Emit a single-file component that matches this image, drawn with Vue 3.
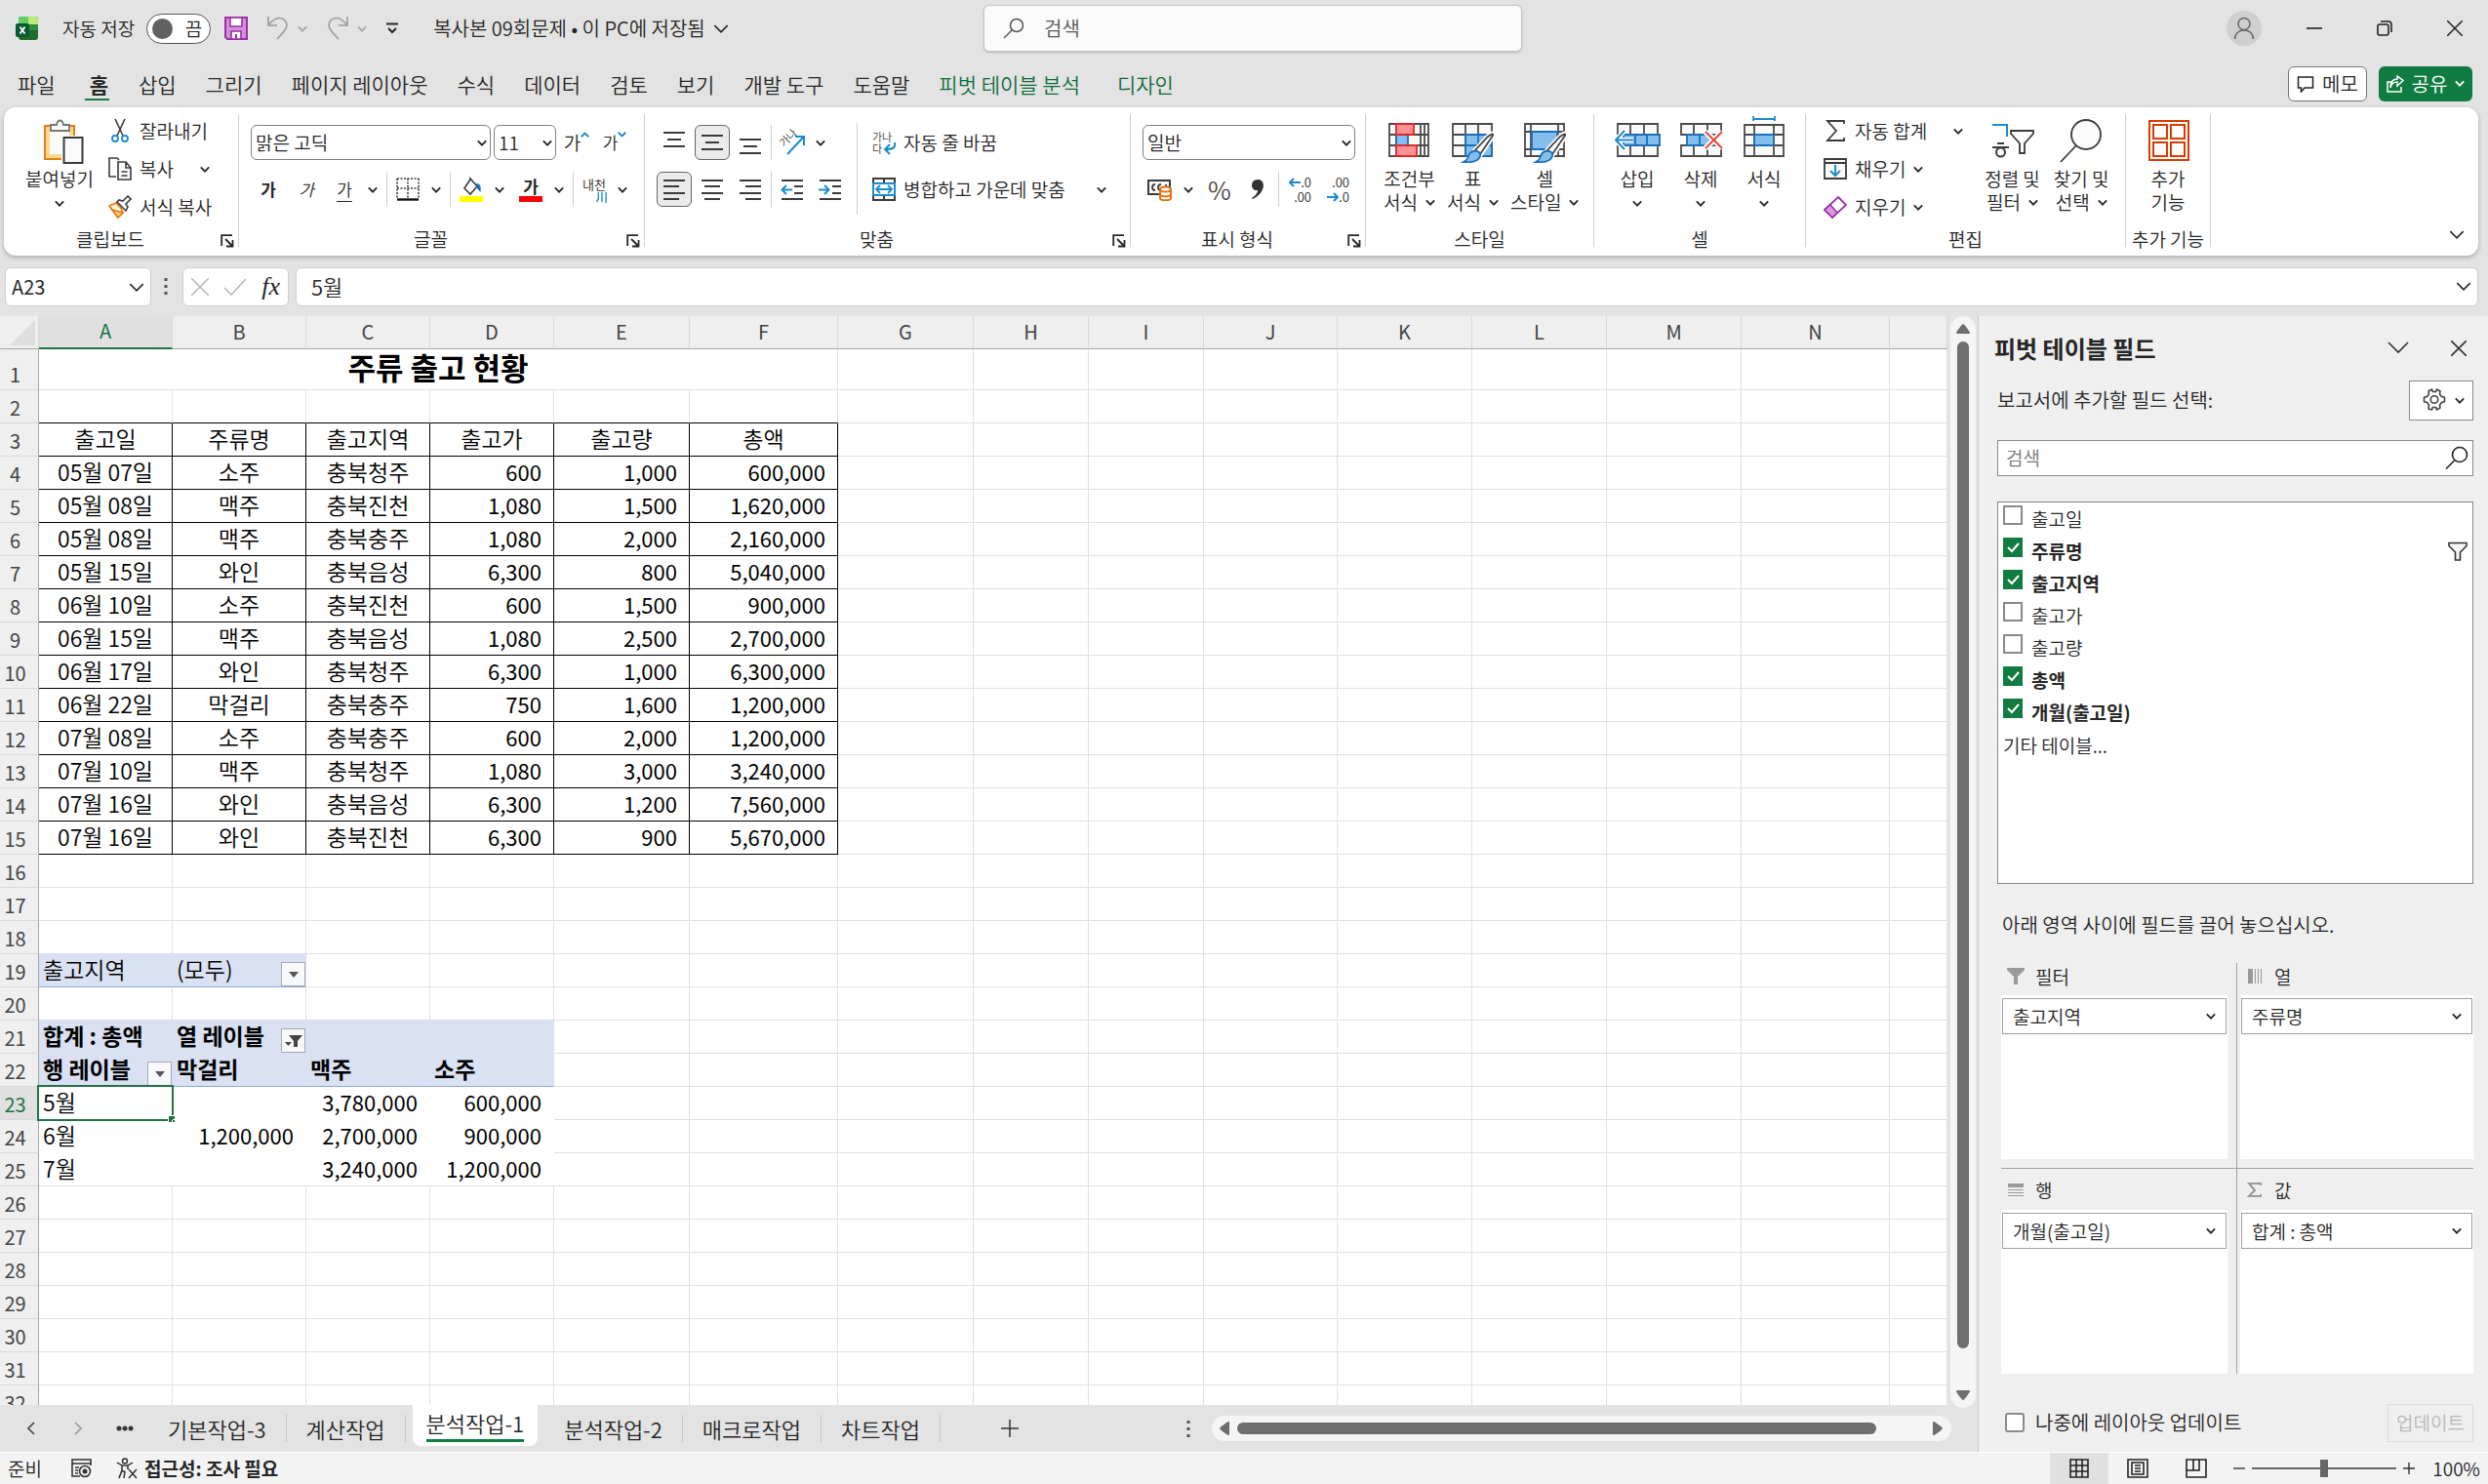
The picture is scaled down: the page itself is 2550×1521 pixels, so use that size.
<script setup>
import { h, ref } from 'vue'

const Chevron = (props) =>
  h('svg', { viewBox: '0 0 12 8', width: props.big ? 16 : 10, height: props.big ? 11 : 7, 'aria-hidden': 'true' }, [
    h('path', { d: 'M1 1.5 6 6.5 11 1.5', fill: 'none', stroke: props.color || '#262626', 'stroke-width': props.big ? 1.2 : 2.2 }),
  ])
Chevron.props = { big: Boolean, color: String }

const Launcher = () =>
  h('svg', { viewBox: '0 0 14 14', width: 14, height: 14, 'aria-hidden': 'true' }, [
    h('path', { d: 'M1.2 12V1.2H12M5 5l7 7M12.5 6v6.5H6', fill: 'none', stroke: '#262626', 'stroke-width': 1.8 }),
  ])

const Lines = (props) =>
  h('svg', { viewBox: '0 0 24 24', width: 24, height: 24, 'aria-hidden': 'true' },
    props.rows.map(([x1, x2, y]) => h('path', { d: `M${x1} ${y}H${x2}`, stroke: '#3b3b3b', 'stroke-width': 2 })))
Lines.props = ['rows']

const menus = ['파일', '홈', '삽입', '그리기', '페이지 레이아웃', '수식', '데이터', '검토', '보기', '개발 도구', '도움말', '피벗 테이블 분석', '디자인']
const cols = 'ABCDEFGHIJKLMN'.split('')

const head = ['출고일', '주류명', '출고지역', '출고가', '출고량', '총액']
const data = [
  ['05월 07일', '소주', '충북청주', '600', '1,000', '600,000'],
  ['05월 08일', '맥주', '충북진천', '1,080', '1,500', '1,620,000'],
  ['05월 08일', '맥주', '충북충주', '1,080', '2,000', '2,160,000'],
  ['05월 15일', '와인', '충북음성', '6,300', '800', '5,040,000'],
  ['06월 10일', '소주', '충북진천', '600', '1,500', '900,000'],
  ['06월 15일', '맥주', '충북음성', '1,080', '2,500', '2,700,000'],
  ['06월 17일', '와인', '충북청주', '6,300', '1,000', '6,300,000'],
  ['06월 22일', '막걸리', '충북충주', '750', '1,600', '1,200,000'],
  ['07월 08일', '소주', '충북충주', '600', '2,000', '1,200,000'],
  ['07월 10일', '맥주', '충북청주', '1,080', '3,000', '3,240,000'],
  ['07월 16일', '와인', '충북음성', '6,300', '1,200', '7,560,000'],
  ['07월 16일', '와인', '충북진천', '6,300', '900', '5,670,000'],
]
const pivot = {
  19: ['출고지역', '(모두)'],
  21: ['합계 : 총액', '열 레이블', '', ''],
  22: ['행 레이블', '막걸리', '맥주', '소주'],
  23: ['5월', '', '3,780,000', '600,000'],
  24: ['6월', '1,200,000', '2,700,000', '900,000'],
  25: ['7월', '', '3,240,000', '1,200,000'],
}

function cell(r, c) {
  if (r === 3 && c < 6) return { t: head[c], k: 'box mid' }
  if (r >= 4 && r <= 15 && c < 6) return { t: data[r - 4][c], k: c < 3 ? 'box mid' : 'box num' }
  if (r === 2 && c < 6) return { t: '', k: 'under' }
  if (r === 18 && c < 2) return { t: '', k: 'fill-under' }
  if (r === 20 && c < 4) return { t: '', k: 'fill-under' }
  if (pivot[r] && c < pivot[r].length) {
    const t = pivot[r][c]
    let k = 'left'
    if (r === 19) k += ' fill rule'
    if (r === 21) k += ' fill bold'
    if (r === 22) k += ' fill bold rule'
    if (r > 22) k = (c ? 'num' : 'left') + (r === 25 ? ' bare-last' : ' bare')
    if (r === 23 && c === 0) k += ' picked'
    return { t, k }
  }
  return { t: '', k: '' }
}
const rows = Array.from({ length: 31 }, (_, i) => {
  const r = i + 2
  return { r, cells: Array.from({ length: 15 }, (_, c) => ({ ...cell(r, c), c })) }
})
const dropKind = (r, c) => (r === 19 && c === 1) || (r === 22 && c === 0) ? 'arrow' : r === 21 && c === 1 ? 'funnel' : ''

const fields = ref([
  { n: '출고일', on: false },
  { n: '주류명', on: true, filtered: true },
  { n: '출고지역', on: true },
  { n: '출고가', on: false },
  { n: '출고량', on: false },
  { n: '총액', on: true },
  { n: '개월(출고일)', on: true },
])
const later = ref(false)
const zoom = ref(50)
const areas = [
  { n: '필터', item: '출고지역', icon: 'funnel' },
  { n: '열', item: '주류명', icon: 'cols' },
  { n: '행', item: '개월(출고일)', icon: 'rows' },
  { n: '값', item: '합계 : 총액', icon: 'sum' },
]
const sheets = ['기본작업-3', '계산작업', '분석작업-1', '분석작업-2', '매크로작업', '차트작업']
</script>

<template>
  <div class="app">
    <header class="title-bar">
      <svg class="logo" viewBox="0 0 24 24" width="24" height="24" aria-hidden="true">
        <rect x="3" y="0" width="20" height="24" rx="3" fill="#1f6b2b" />
        <path d="M3 8V3a3 3 0 0 1 3-3h7v8z" fill="#5fd068" />
        <path d="M13 0h7a3 3 0 0 1 3 3v5H13z" fill="#b9ec7a" />
        <path d="M13 8h10v6H13z" fill="#2f8f3a" />
        <rect x="0" y="7" width="14" height="14" rx="2" fill="#0c5a34" />
        <path d="m4.500 10.500 5 7m0-7-5 7" stroke="#fff" stroke-width="1.800" />
      </svg>
      <span class="auto" id="auto-label">자동 저장</span>
      <button class="toggle" role="switch" aria-checked="false" aria-labelledby="auto-label"><i></i>끔</button>
      <button class="plain save" aria-label="저장">
        <svg viewBox="0 0 24 24" width="24" height="24">
          <path d="M1 1h22v22H3l-2-2z" fill="#d58fdc" stroke="#9a2fa5" stroke-width="2" />
          <path d="M6 1h12v9H6zM7 15h10v8H7z" fill="#fff" stroke="#9a2fa5" stroke-width="1.600" />
          <path d="M12 18v5" stroke="#9a2fa5" stroke-width="2" />
        </svg>
      </button>
      <button class="plain undo" aria-label="실행 취소">
        <svg viewBox="0 0 24 26" width="24" height="26"><path d="M2 1v9h9M2.500 9.500C8 2 15 .5 19 5c4 5 2 9-8 19" fill="none" stroke="#9c9c9c" stroke-width="1.600" /></svg>
        <Chevron color="#a8a8a8" />
      </button>
      <button class="plain undo" aria-label="다시 실행">
        <svg viewBox="0 0 24 26" width="24" height="26"><path d="M22 1v9h-9M21.500 9.500C16 2 9 .5 5 5c-4 5-2 9 8 19" fill="none" stroke="#9c9c9c" stroke-width="1.600" /></svg>
        <Chevron color="#a8a8a8" />
      </button>
      <button class="plain custom" aria-label="빠른 실행 도구 모음 사용자 지정">
        <svg viewBox="0 0 12 12" width="12" height="12"><path d="M0 1.500h12M2 6l4 4 4-4" fill="none" stroke="#262626" stroke-width="2" /></svg>
      </button>
      <button class="plain doc">복사본 09회문제 • 이 PC에 저장됨 <Chevron big /></button>
      <label class="find">
        <svg viewBox="0 0 22 22" width="22" height="22" aria-hidden="true"><circle cx="14" cy="8" r="6.500" fill="none" stroke="#555" stroke-width="1.500" /><path d="M9.500 12.500 1 21" stroke="#555" stroke-width="1.500" /></svg>
        <input type="text" placeholder="검색" aria-label="검색" />
      </label>
      <div class="window">
        <button class="plain avatar" aria-label="로그인">
          <svg viewBox="0 0 36 36" width="36" height="36"><circle cx="18" cy="18" r="18" fill="#cfcfcf" /><circle cx="18" cy="13.500" r="6" fill="none" stroke="#666" stroke-width="1.500" /><path d="M8.500 29c0-12 19-12 19 0" fill="none" stroke="#666" stroke-width="1.500" /></svg>
        </button>
        <button class="plain" aria-label="최소화"><svg viewBox="0 0 16 16" width="16" height="16"><path d="M0 8h16" stroke="#222" stroke-width="1.600" /></svg></button>
        <button class="plain" aria-label="이전 크기로 복원"><svg viewBox="0 0 16 16" width="16" height="16"><rect x="1" y="4" width="11" height="11" rx="2" fill="none" stroke="#222" stroke-width="1.600" /><path d="M4 1h8a3 3 0 0 1 3 3v8" fill="none" stroke="#222" stroke-width="1.600" /></svg></button>
        <button class="plain" aria-label="닫기"><svg viewBox="0 0 16 16" width="16" height="16"><path d="m0 0 16 16M16 0 0 16" stroke="#222" stroke-width="1.500" /></svg></button>
      </div>
    </header>

    <nav class="menu">
      <a v-for="(m, i) in menus" :key="m" href="#" :class="{ on: i === 1, context: i > 10 }">{{ m }}</a>
      <div class="menu-right">
        <button class="memo">
          <svg viewBox="0 0 18 18" width="18" height="18" aria-hidden="true"><path d="M1.500 2h15v11H8l-3.500 4v-4h-3z" fill="none" stroke="#222" stroke-width="1.500" /></svg>메모
        </button>
        <button class="share">
          <svg viewBox="0 0 18 18" width="18" height="18" aria-hidden="true"><path d="M5 7H1v10h14v-5M4 13c1-5 4-6 7-6v4l6-5.500L11 1v3C7 4 4 7 4 13z" fill="none" stroke="#fff" stroke-width="1.500" /></svg>공유
          <Chevron color="#fff" />
        </button>
      </div>
    </nav>

    <section class="ribbon" aria-label="홈 리본">
      <div class="group clip">
        <div class="body">
          <button class="big paste">
            <svg viewBox="0 0 44 46" width="44" height="46" aria-hidden="true">
              <path d="M3 7h30v34H3z" fill="#fafafa" stroke="#e67e14" stroke-width="2" /><path d="M6 10h24v28H6z" fill="#fafafa" stroke="#f9d98c" stroke-width="4" />
              <path d="M9 12V6h6c1-6 6-6 7 0h6v6z" fill="#fafafa" stroke="#777" stroke-width="1.800" />
              <path d="M20 17h24v29H20z" fill="#fff" /><path d="M22.500 19h19v26h-19z" fill="#fafafa" stroke="#3b3b3b" stroke-width="2" />
            </svg>
            <span>붙여넣기</span><Chevron />
          </button>
          <div class="stack">
            <button class="line">
              <svg viewBox="0 0 24 24" width="24" height="24" aria-hidden="true"><path d="m7 0 8 17M17 0 9 17" stroke="#3b3b3b" stroke-width="1.600" /><circle cx="7" cy="20" r="3" fill="none" stroke="#1e8bcd" stroke-width="1.800" /><circle cx="17" cy="20" r="3" fill="none" stroke="#1e8bcd" stroke-width="1.800" /></svg>잘라내기
            </button>
            <button class="line wide">
              <svg viewBox="0 0 24 24" width="24" height="24" aria-hidden="true"><path d="M8 20H1V1h8l2 2" fill="none" stroke="#3b3b3b" stroke-width="1.600" /><path d="M10 5h8l5 6v12H10zM18 5v6h5M13.500 15h6M13.500 19h6" fill="#fafafa" stroke="#3b3b3b" stroke-width="1.600" /></svg>복사 <Chevron />
            </button>
            <button class="line">
              <svg viewBox="0 0 24 24" width="24" height="24" aria-hidden="true"><path d="m1 11 9 12 5-5-2-5-5-5z" fill="#fff3da" stroke="#e67e14" stroke-width="1.800" /><path d="m4 15 11 3-5 5z" fill="#f9cf80" stroke="#e67e14" stroke-width="1.500" /><path d="m9 7 9 9 2-4-2-3 5-5-3-3-5 5-4-1z" fill="#fff" stroke="#3b3b3b" stroke-width="1.600" /></svg>서식 복사
            </button>
          </div>
        </div>
        <div class="label has-launch"><span>클립보드</span><button class="plain launch" aria-label="클립보드 옵션"><Launcher /></button></div>
      </div>

      <div class="group font">
        <div class="body rows">
          <div class="row">
            <span class="pick name"><select aria-label="글꼴"><option>맑은 고딕</option></select><Chevron /></span>
            <span class="pick size"><select aria-label="글꼴 크기"><option>11</option></select><Chevron /></span>
            <button class="ib grow" aria-label="글꼴 크기 크게">가<svg viewBox="0 0 12 8" width="9" height="6"><path d="m1 7 5-5 5 5" fill="none" stroke="#1e8bcd" stroke-width="2.500" /></svg></button>
            <button class="ib shrink" aria-label="글꼴 크기 작게">가<svg viewBox="0 0 12 8" width="9" height="6"><path d="m1 1 5 5 5-5" fill="none" stroke="#1e8bcd" stroke-width="2.500" /></svg></button>
          </div>
          <div class="row">
            <button class="ib b" aria-label="굵게">가</button>
            <button class="ib i" aria-label="기울임꼴">가</button>
            <span class="pair"><button class="ib u" aria-label="밑줄">가</button><button class="cv" aria-label="밑줄 종류"><Chevron /></button></span>
            <i class="sep"></i>
            <span class="pair"><button class="ib" aria-label="테두리"><svg viewBox="0 0 24 24" width="24" height="24"><path d="M1 1h22M1 1v20M23 1v20M12 1v20M1 11h22" stroke="#3b3b3b" stroke-width="1.600" stroke-dasharray="2 1.500" /><path d="M1 22.500h22" stroke="#111" stroke-width="2.400" /></svg></button><button class="cv" aria-label="테두리 종류"><Chevron /></button></span>
            <i class="sep"></i>
            <span class="pair"><button class="ib" aria-label="채우기 색"><svg viewBox="0 0 24 26" width="24" height="26"><path d="m11 2 7 8-7 8-6-6 6-9z" fill="#fff" stroke="#3b3b3b" stroke-width="1.600" /><path d="M17 7c5 0 5 4 4.500 9L17 11z" fill="#1e6fb8" /><rect y="20" width="24" height="6" fill="#ff0" /></svg></button><button class="cv" aria-label="채우기 색 목록"><Chevron /></button></span>
            <span class="pair"><button class="ib ink" aria-label="글꼴 색">가<i></i></button><button class="cv" aria-label="글꼴 색 목록"><Chevron /></button></span>
            <i class="sep"></i>
            <span class="pair"><button class="ib ruby" aria-label="윗주"><span>내천</span><svg viewBox="0 0 12 12" width="12" height="11"><path d="M2 0v7l-2 4M6 0v11M10.500 0v12" fill="none" stroke="#1e8bcd" stroke-width="1.500" /></svg></button><button class="cv" aria-label="윗주 옵션"><Chevron /></button></span>
          </div>
        </div>
        <div class="label has-launch"><span>글꼴</span><button class="plain launch" aria-label="글꼴 옵션"><Launcher /></button></div>
      </div>

      <div class="group align">
        <div class="body">
          <div class="rows">
            <div class="row">
              <button class="ib" aria-label="위쪽 맞춤"><Lines :rows="[[1, 23, 2], [5, 19, 9], [1, 23, 16]]" /></button>
              <button class="ib sel" aria-label="가운데 맞춤"><Lines :rows="[[1, 23, 5], [5, 19, 12], [1, 23, 19]]" /></button>
              <button class="ib" aria-label="아래쪽 맞춤"><Lines :rows="[[1, 23, 9], [5, 19, 16], [1, 23, 23]]" /></button>
              <i class="sep"></i>
              <span class="pair"><button class="ib" aria-label="방향"><svg class="glyph" viewBox="0 0 26 26" width="26" height="26"><text x="1" y="14" font-size="11" fill="#3b3b3b" transform="rotate(-45 8 12)">가나</text><path d="M8 25 24 8M16 7h9v9" fill="none" stroke="#1e8bcd" stroke-width="2" /></svg></button><button class="cv" aria-label="방향 목록"><Chevron /></button></span>
            </div>
            <div class="row">
              <button class="ib sel" aria-label="왼쪽 맞춤"><Lines :rows="[[1, 23, 3], [1, 17, 9], [1, 23, 16], [1, 17, 22]]" /></button>
              <button class="ib" aria-label="가로 가운데 맞춤"><Lines :rows="[[1, 23, 3], [4, 20, 9], [1, 23, 16], [4, 20, 22]]" /></button>
              <button class="ib" aria-label="오른쪽 맞춤"><Lines :rows="[[1, 23, 3], [7, 23, 9], [1, 23, 16], [7, 23, 22]]" /></button>
              <i class="sep"></i>
              <button class="ib" aria-label="내어쓰기"><svg viewBox="0 0 24 24" width="24" height="24"><path d="M1 3h22M14 9h9M14 16h9M1 22h22" stroke="#3b3b3b" stroke-width="2" /><path d="M12 12.500H2M6 8l-4.500 4.500L6 17" fill="none" stroke="#1e8bcd" stroke-width="2" /></svg></button>
              <button class="ib" aria-label="들여쓰기"><svg viewBox="0 0 24 24" width="24" height="24"><path d="M1 3h22M14 9h9M14 16h9M1 22h22" stroke="#3b3b3b" stroke-width="2" /><path d="M0 12.500h10M6 8l4.500 4.500L6 17" fill="none" stroke="#1e8bcd" stroke-width="2" /></svg></button>
            </div>
          </div>
          <i class="tall"></i>
          <div class="rows">
            <button class="line">
              <svg class="glyph" viewBox="0 0 26 26" width="26" height="26" aria-hidden="true"><text x="1" y="12" font-size="11" fill="#3b3b3b">가나</text><text x="1" y="24" font-size="11" fill="#3b3b3b">다</text><path d="M24 13c1 5-1 7-9 7M19 15l-5 5 5 5" fill="none" stroke="#1e8bcd" stroke-width="2" /></svg>자동 줄 바꿈
            </button>
            <button class="line merge">
              <svg viewBox="0 0 26 26" width="26" height="26" aria-hidden="true"><path d="M2 2h22v22H2zM13 2v4M13 20v4" fill="none" stroke="#3b3b3b" stroke-width="2" /><path d="M2 7h22v12H2z" fill="#fff" stroke="#1e8bcd" stroke-width="2" /><path d="M5 13h16M9 9l-4 4 4 4M17 9l4 4-4 4" fill="none" stroke="#1e8bcd" stroke-width="1.800" /></svg>병합하고 가운데 맞춤 <Chevron />
            </button>
          </div>
        </div>
        <div class="label has-launch"><span>맞춤</span><button class="plain launch" aria-label="맞춤 옵션"><Launcher /></button></div>
      </div>

      <div class="group number">
        <div class="body rows">
          <div class="row"><span class="pick fmt"><select aria-label="표시 형식"><option>일반</option></select><Chevron /></span></div>
          <div class="row">
            <span class="pair"><button class="ib" aria-label="회계 표시 형식"><svg viewBox="0 0 26 24" width="26" height="24"><path d="M1 3h22v14H1z" fill="#fafafa" stroke="#3b3b3b" stroke-width="2" /><path d="M8 7c-4 0-4 6 0 6M14 7c-4 0-4 6 0 6M19 7v3" fill="none" stroke="#3b3b3b" stroke-width="1.800" /><path d="M13 12v9c0 3 11 3 11 0v-9" fill="#fff" stroke="#e0730d" stroke-width="2" /><ellipse cx="18.500" cy="12" rx="5.500" ry="2.500" fill="#fff" stroke="#e0730d" stroke-width="2" /><path d="M13 17c0 3 11 3 11 0" fill="none" stroke="#e0730d" stroke-width="2" /></svg></button><button class="cv" aria-label="회계 표시 형식 목록"><Chevron /></button></span>
            <button class="ib pct" aria-label="백분율">%</button>
            <button class="ib" aria-label="쉼표"><svg viewBox="0 0 14 20" width="14" height="20"><path d="M7 0c9 0 8 14-5 20l-1-1c4-3 6-5 6-8C-1 12-1 0 7 0z" fill="#333" /></svg></button>
            <i class="sep"></i>
            <button class="ib dec" aria-label="자릿수 늘림"><span><svg viewBox="0 0 12 10" width="12" height="10"><path d="M12 5H1M5 1 1 5l4 4" fill="none" stroke="#1e8bcd" stroke-width="2" /></svg>.0</span><span>.00</span></button>
            <button class="ib dec" aria-label="자릿수 줄임"><span>.00</span><span><svg viewBox="0 0 12 10" width="12" height="10"><path d="M0 5h11M7 1l4 4-4 4" fill="none" stroke="#1e8bcd" stroke-width="2" /></svg>.0</span></button>
          </div>
        </div>
        <div class="label has-launch"><span>표시 형식</span><button class="plain launch" aria-label="표시 형식 옵션"><Launcher /></button></div>
      </div>

      <div class="group style">
        <div class="body">
          <button class="big">
            <svg viewBox="0 0 44 46" width="44" height="46" aria-hidden="true"><path d="M2 5h40v33H2zM2 16h40M2 27h40M9 5v33M34 5v33M38 5v33" fill="#fafafa" stroke="#4a4a4a" stroke-width="1.800" /><path d="M9 16h12v11H9z" fill="#83beec" stroke="#1a6fb8" stroke-width="1.800" /><path d="M9 5h18v11H9zM9 27h21v11H9z" fill="#ff9196" stroke="#d92a2a" stroke-width="1.800" /></svg>
            <span>조건부</span><span>서식 <Chevron /></span>
          </button>
          <button class="big">
            <svg viewBox="0 0 44 46" width="44" height="46" aria-hidden="true"><path d="M2 5h40v33H2zM2 16h40M2 27h40M15 5v33M28 5v33" fill="#fafafa" stroke="#4a4a4a" stroke-width="1.800" /><path d="M15 16h27v22H15zM28 16v22M15 27h27" fill="#83beec" stroke="#1a6fb8" stroke-width="1.800" /><path d="m44 16-14 21-6-4 14-15c3-3 6-4 6-2z" fill="#fff" stroke="#fff" stroke-width="5" /><path d="m43 17-13 19-5-4 13-14c3-2 6-4 5-1z" fill="#fff" stroke="#444" stroke-width="1.800" /><path d="M24 33c4-1 7 2 6 5-1 4-5 7-17 6 4-2 4-3 5-6 1-3 3-5 6-5z" fill="#83beec" stroke="#1a6fb8" stroke-width="1.800" /></svg>
            <span>표</span><span>서식 <Chevron /></span>
          </button>
          <button class="big">
            <svg viewBox="0 0 44 46" width="44" height="46" aria-hidden="true"><path d="M2 5h40v33H2zM2 13h40M8 5v33M36 5v33M2 31h40" fill="#fafafa" stroke="#4a4a4a" stroke-width="1.800" /><path d="M9 13h26v18H9z" fill="#83beec" stroke="#1a6fb8" stroke-width="1.800" /><path d="m44 16-14 21-6-4 14-15c3-3 6-4 6-2z" fill="#fff" stroke="#fff" stroke-width="5" /><path d="m43 17-13 19-5-4 13-14c3-2 6-4 5-1z" fill="#fff" stroke="#444" stroke-width="1.800" /><path d="M24 33c4-1 7 2 6 5-1 4-5 7-17 6 4-2 4-3 5-6 1-3 3-5 6-5z" fill="#83beec" stroke="#1a6fb8" stroke-width="1.800" /></svg>
            <span>셀</span><span>스타일 <Chevron /></span>
          </button>
        </div>
        <div class="label"><span>스타일</span></div>
      </div>

      <div class="group cells">
        <div class="body">
          <button class="big">
            <svg viewBox="0 0 48 46" width="48" height="46" aria-hidden="true"><path d="M4 5h41v33H4zM4 16h41M4 27h41M17 5v33M31 5v33" fill="#fafafa" stroke="#4a4a4a" stroke-width="1.800" /><path d="M10 16h37v11H10zM22 16v11M34 16v11" fill="#83beec" stroke="#1a6fb8" stroke-width="1.800" /><path d="M20 21.500H2M11 12l-9 9.500 9 9.500" fill="none" stroke="#fff" stroke-width="5" /><path d="M20 21.500H2M11 12l-9 9.500 9 9.500" fill="none" stroke="#1e8bcd" stroke-width="2" /></svg>
            <span>삽입</span><Chevron />
          </button>
          <button class="big">
            <svg viewBox="0 0 48 46" width="48" height="46" aria-hidden="true"><path d="M4 5h41v11H4zM4 27h41v11H4zM17 5v11M31 5v11M17 27v11M31 27v11" fill="#fafafa" stroke="#4a4a4a" stroke-width="1.800" /><path d="M10 16h26v11H10zM23 16v11" fill="#83beec" stroke="#1a6fb8" stroke-width="1.800" /><path d="m29 13 17 17M46 13 29 30" stroke="#fff" stroke-width="6" /><path d="m29 13 17 17M46 13 29 30" stroke="#e8453c" stroke-width="2" /></svg>
            <span>삭제</span><Chevron />
          </button>
          <button class="big">
            <svg class="glyph" viewBox="0 0 48 46" width="48" height="46" aria-hidden="true"><path d="M4 6h40v32H4zM4 16h40M4 27h40M14 6v32M34 6v32" fill="#fafafa" stroke="#4a4a4a" stroke-width="1.800" /><path d="M14 16h20v11H14z" fill="#83beec" stroke="#1a6fb8" stroke-width="1.800" /><path d="M13 0h22M13-3v5M35-3v5" stroke="#1e8bcd" stroke-width="1.800" /></svg>
            <span>서식</span><Chevron />
          </button>
        </div>
        <div class="label"><span>셀</span></div>
      </div>

      <div class="group edit">
        <div class="body">
          <div class="stack">
            <button class="line wide">
              <svg viewBox="0 0 24 24" width="24" height="24" aria-hidden="true"><path d="M21 5V2H4l9 10-9 10h17v-3" fill="none" stroke="#3b3b3b" stroke-width="1.800" /></svg>자동 합계 <Chevron />
            </button>
            <button class="line">
              <svg viewBox="0 0 24 24" width="24" height="24" aria-hidden="true"><path d="M1 2h22v20H1zM1 6h22" fill="#fafafa" stroke="#3b3b3b" stroke-width="1.800" /><path d="M12 8v11M7 14l5 5 5-5" fill="none" stroke="#1e8bcd" stroke-width="2" /></svg>채우기 <Chevron />
            </button>
            <button class="line">
              <svg viewBox="0 0 24 24" width="24" height="24" aria-hidden="true"><path d="m15 2 8 8-14 13-8-8z" fill="#fff" stroke="#9a2fa5" stroke-width="1.800" /><path d="m7 10 7 8-5 5-8-8z" fill="#d79bdc" stroke="#9a2fa5" stroke-width="1.500" /></svg>지우기 <Chevron />
            </button>
          </div>
          <button class="big sort">
            <svg viewBox="0 0 44 46" width="44" height="46" aria-hidden="true"><path d="M1 6h15v12" fill="none" stroke="#1e8bcd" stroke-width="2" /><path d="M6 25h7M1 29h17" stroke="#3b3b3b" stroke-width="2" /><circle cx="9.500" cy="34" r="4.500" fill="none" stroke="#3b3b3b" stroke-width="2" /><path d="M20 12h23v3l-9 10v10h-5V25l-9-10z" fill="#fafafa" stroke="#3b3b3b" stroke-width="1.800" /></svg>
            <span>정렬 및</span><span>필터 <Chevron /></span>
          </button>
          <button class="big">
            <svg viewBox="0 0 44 46" width="44" height="46" aria-hidden="true"><circle cx="27" cy="16" r="15" fill="#fafafa" stroke="#3b3b3b" stroke-width="1.800" /><path d="M17 27 1 44" stroke="#3b3b3b" stroke-width="1.800" /></svg>
            <span>찾기 및</span><span>선택 <Chevron /></span>
          </button>
        </div>
        <div class="label"><span>편집</span></div>
      </div>

      <div class="group addin">
        <div class="body">
          <button class="big">
            <svg viewBox="0 0 44 46" width="44" height="46" aria-hidden="true"><path d="M3 2h40v40H3zM7 6h14v14H7zM25 6h14v14H25zM7 24h14v14H7zM25 24h14v14H25z" fill="#fff" stroke="#d83b01" stroke-width="2" /></svg>
            <span>추가</span><span>기능</span>
          </button>
        </div>
        <div class="label"><span>추가 기능</span></div>
      </div>
      <button class="plain fold" aria-label="리본 축소"><Chevron big /></button>
    </section>

    <div class="formula">
      <label class="name-box"><input type="text" value="A23" aria-label="이름 상자" /><Chevron big /></label>
      <svg class="grip" viewBox="0 0 4 18" width="4" height="18" aria-hidden="true"><path d="M2 0v18" stroke="#555" stroke-width="3" stroke-dasharray="3 4" /></svg>
      <div class="fx">
        <button class="plain" aria-label="취소"><svg viewBox="0 0 18 18" width="18" height="18"><path d="m0 0 18 18M18 0 0 18" stroke="#b5b5b5" stroke-width="1.500" /></svg></button>
        <button class="plain" aria-label="입력"><svg viewBox="0 0 24 18" width="24" height="18"><path d="m1 10 7 7L23 1" fill="none" stroke="#b5b5b5" stroke-width="1.500" /></svg></button>
        <button class="plain fn" aria-label="함수 삽입">fx</button>
      </div>
      <label class="entry"><input type="text" value="5월" aria-label="수식 입력줄" /><Chevron big /></label>
    </div>

    <div class="work">
      <div class="book">
        <div class="grid-area">
          <div class="sheet">
            <table>
              <colgroup><col class="c-n" /><col class="c-a" /><col class="c-a" /><col class="c-c" /><col class="c-c" /><col class="c-g" /><col class="c-f" /><col class="c-g" /><col class="c-h" /><col class="c-h" /><col class="c-a" /><col class="c-k" /><col class="c-k" /><col class="c-k" /><col class="c-f" /><col /></colgroup>
              <thead>
                <tr><th class="corner"><svg viewBox="0 0 26 26" width="26" height="26" aria-hidden="true"><path d="M26 0v26H0z" fill="#dedede" /></svg></th><th v-for="c in cols" :key="c" scope="col" :class="{ cur: c === 'A' }">{{ c }}</th><th></th></tr>
              </thead>
              <tbody>
                <tr class="first"><th scope="row">1</th><td colspan="6" class="title">주류 출고 현황</td><td v-for="n in 9" :key="n"></td></tr>
                <tr v-for="row in rows" :key="row.r">
                  <th scope="row" :class="{ cur: row.r === 23 }">{{ row.r }}</th>
                  <td v-for="x in row.cells" :key="x.c" :class="x.k">{{ x.t }}<button v-if="dropKind(row.r, x.c)" class="drop" aria-label="필터 단추">
                    <svg v-if="dropKind(row.r, x.c) === 'arrow'" viewBox="0 0 10 6" width="10" height="6"><path d="M0 0h10L5 6z" fill="#555" /></svg>
                    <svg v-else viewBox="0 0 18 14" width="18" height="14"><path d="M4 1h14l-5 6v6H9V7zM0 8h7L3.500 12z" fill="#444" /></svg>
                  </button></td>
                </tr>
              </tbody>
            </table>
          </div>
          <div class="vbar">
            <svg viewBox="0 0 14 10" width="14" height="10" aria-hidden="true"><path d="M7 0c1 0 7 8 7 9s-.5 1-1 1H1c-.5 0-1 0-1-1s6-9 7-9z" fill="#6e6e6e" /></svg>
            <i></i>
            <svg viewBox="0 0 14 10" width="14" height="10" aria-hidden="true"><path d="M7 10c1 0 7-8 7-9s-.5-1-1-1H1C.5 0 0 0 0 1s6 9 7 9z" fill="#6e6e6e" /></svg>
          </div>
        </div>
        <div class="tabs">
          <button class="plain nav" aria-label="이전 시트"><svg viewBox="0 0 8 14" width="8" height="14"><path d="M7 1 1 7l6 6" fill="none" stroke="#444" stroke-width="1.600" /></svg></button>
          <button class="plain nav" aria-label="다음 시트"><svg viewBox="0 0 8 14" width="8" height="14"><path d="m1 1 6 6-6 6" fill="none" stroke="#999" stroke-width="1.600" /></svg></button>
          <button class="plain nav" aria-label="더 보기"><svg viewBox="0 0 18 6" width="18" height="6"><circle cx="3" cy="3" r="2.500" fill="#333" /><circle cx="9" cy="3" r="2.500" fill="#333" /><circle cx="15" cy="3" r="2.500" fill="#333" /></svg></button>
          <button v-for="(s, i) in sheets" :key="s" class="tab" :class="{ on: i === 2 }"><span>{{ s }}</span></button>
          <button class="plain add" aria-label="새 시트"><svg viewBox="0 0 18 18" width="18" height="18"><path d="M9 0v18M0 9h18" stroke="#333" stroke-width="1.500" /></svg></button>
          <div class="hwrap">
            <svg viewBox="0 0 4 18" width="4" height="18" aria-hidden="true"><path d="M2 1v17" stroke="#555" stroke-width="3" stroke-dasharray="3 4" /></svg>
            <div class="hbar">
              <svg viewBox="0 0 10 14" width="10" height="14" aria-hidden="true"><path d="M0 7c0-1 8-7 9-7s1 .5 1 1v12c0 .5 0 1-1 1S0 8 0 7z" fill="#6e6e6e" /></svg>
              <i></i>
              <svg viewBox="0 0 10 14" width="10" height="14" aria-hidden="true"><path d="M10 7c0-1-8-7-9-7S0 .5 0 1v12c0 .5 0 1 1 1s9-6 9-7z" fill="#6e6e6e" /></svg>
            </div>
          </div>
        </div>
      </div>

      <aside class="pane">
        <div class="pane-head">
          <h2>피벗 테이블 필드</h2>
          <button class="plain" aria-label="작업창 옵션"><svg viewBox="0 0 22 13" width="22" height="13"><path d="m1 1 10 10L21 1" fill="none" stroke="#333" stroke-width="1.600" /></svg></button>
          <button class="plain" aria-label="닫기"><svg viewBox="0 0 16 16" width="16" height="16"><path d="m0 0 16 16M16 0 0 16" stroke="#333" stroke-width="1.600" /></svg></button>
        </div>
        <div class="pane-sub">
          <span>보고서에 추가할 필드 선택:</span>
          <button class="gear" aria-label="도구">
            <svg viewBox="0 0 24 24" width="24" height="24"><path d="m9.500 1 .8 2.500h3.400l.8-2.500 3.500 2-.5 2.800 1.700 2.600 3.300.8v4.600l-3.300.8-1.700 2.600.5 2.800-3.500 2-.8-2.500h-3.400L9.500 22 6 21l.5-3.800-1.700-2.600-3.300-.8V9.200l3.300-.8 1.700-2.600L6 3z" fill="none" stroke="#444" stroke-width="1.600" stroke-linejoin="round" /><circle cx="12" cy="11.500" r="3.800" fill="none" stroke="#444" stroke-width="1.600" /></svg>
            <Chevron />
          </button>
        </div>
        <label class="pane-find"><input type="text" placeholder="검색" aria-label="필드 검색" /><svg viewBox="0 0 24 24" width="24" height="24" aria-hidden="true"><circle cx="15" cy="9" r="7.500" fill="none" stroke="#222" stroke-width="1.600" /><path d="M10 14.500 1 23.500" stroke="#222" stroke-width="1.600" /></svg></label>
        <div class="fields">
          <label v-for="f in fields" :key="f.n" :class="{ on: f.on }">
            <input v-model="f.on" type="checkbox" /><span>{{ f.n }}</span>
            <svg v-if="f.filtered" viewBox="0 0 20 20" width="20" height="20" aria-hidden="true"><path d="M1 1.500h18v3L12.500 11v8h-5v-8L1 4.500z" fill="#f5f5f5" stroke="#333" stroke-width="1.600" /></svg>
          </label>
          <a href="#">기타 테이블...</a>
        </div>
        <p class="hint">아래 영역 사이에 필드를 끌어 놓으십시오.</p>
        <div class="areas">
          <section v-for="a in areas" :key="a.n">
            <h3>
              <svg v-if="a.icon === 'funnel'" viewBox="0 0 18 18" width="18" height="18" aria-hidden="true"><path d="M0 0h18v2l-7 7v8H7V9L0 2z" fill="#9a9a9a" /></svg>
              <svg v-else-if="a.icon === 'cols'" viewBox="0 0 18 18" width="18" height="18" aria-hidden="true"><path d="M2 1h5v15H2zM9 1h1v15H9zM12 1h1v15h-1zM15 1h1v15h-1z" fill="#9a9a9a" /></svg>
              <svg v-else-if="a.icon === 'rows'" viewBox="0 0 18 18" width="18" height="18" aria-hidden="true"><path d="M1 2h16v4H1zM1 8h16v1H1zM1 11h16v1H1zM1 14h16v1H1z" fill="#9a9a9a" /></svg>
              <svg v-else viewBox="0 0 18 18" width="18" height="18" aria-hidden="true"><path d="M15 4V2H3l6 7-6 6h12v-2" fill="none" stroke="#9a9a9a" stroke-width="2" /></svg>
              {{ a.n }}
            </h3>
            <div class="well"><button>{{ a.item }}<Chevron /></button></div>
          </section>
        </div>
        <div class="pane-foot">
          <label><input v-model="later" type="checkbox" />나중에 레이아웃 업데이트</label>
          <button disabled>업데이트</button>
        </div>
      </aside>
    </div>

    <footer class="status">
      <span>준비</span>
      <svg viewBox="0 0 22 20" width="22" height="20" aria-hidden="true"><path d="M9 18H1V1h19v6M1 5h19M4 9h4M4 12h3M4 15h3" fill="none" stroke="#333" stroke-width="1.600" /><circle cx="14" cy="13" r="5.500" fill="#f3f3f3" stroke="#333" stroke-width="1.600" /><circle cx="14" cy="13" r="2.500" fill="#333" /></svg>
      <button class="plain access">
        <svg viewBox="0 0 22 22" width="22" height="22" aria-hidden="true"><circle cx="9" cy="3.500" r="2.500" fill="none" stroke="#333" stroke-width="1.500" /><path d="M1 5c5 4 11 4 16 0M6 8v5L3 21M12 8v4M6 14l3 0M13 12l8 9M21 12l-8 9M9 14l-1 7" fill="none" stroke="#333" stroke-width="1.600" /></svg>접근성: 조사 필요
      </button>
      <div class="views">
        <button class="plain on" aria-label="기본"><svg viewBox="0 0 20 20" width="20" height="20"><path d="M1 1h18v18H1zM7 1v18M13 1v18M1 7h18M1 13h18" fill="none" stroke="#222" stroke-width="1.600" /></svg></button>
        <button class="plain" aria-label="페이지 레이아웃"><svg viewBox="0 0 22 20" width="22" height="20"><path d="M1 1h20v18H1zM5 4h12v12H5zM8 7h6M8 10h6M8 13h6" fill="none" stroke="#222" stroke-width="1.600" /></svg></button>
        <button class="plain" aria-label="페이지 나누기 미리 보기"><svg viewBox="0 0 22 20" width="22" height="20"><path d="M1 1h20v18H1zM1 12h13V1M8 1v11" fill="none" stroke="#222" stroke-width="1.600" /></svg></button>
      </div>
      <button class="plain step" aria-label="축소"><svg viewBox="0 0 12 12" width="12" height="12"><path d="M0 6h12" stroke="#333" stroke-width="1.400" /></svg></button>
      <input v-model="zoom" class="zoom" type="range" min="0" max="100" aria-label="확대/축소" />
      <button class="plain step" aria-label="확대"><svg viewBox="0 0 12 12" width="12" height="12"><path d="M0 6h12M6 0v12" stroke="#333" stroke-width="1.400" /></svg></button>
      <span class="pc">100%</span>
    </footer>
  </div>
</template>

<style>
body { margin: 0; background: #e3e3e3; }
</style>

<style scoped>
.app { display: flex; flex-direction: column; height: 100vh; overflow: hidden; background: #e3e3e3; color: #262626; font-family: "Noto Sans CJK KR", sans-serif; font-size: 19px; font-weight: 350; line-height: 24px; }
.app * { box-sizing: border-box; }
button, input, select { font: inherit; color: inherit; margin: 0; }
button { display: flex; align-items: center; justify-content: center; padding: 0; border: 0; background: none; white-space: nowrap; }
svg { flex: none; display: block; }
.glyph { overflow: visible; }
a { color: inherit; text-decoration: none; }
input { min-width: 0; border: 0; background: none; outline: 0; }

.title-bar { display: flex; align-items: center; height: 58px; padding: 0 16px; position: relative; }
.auto { margin-left: 24px; }
.toggle { width: 66px; height: 31px; margin-left: 12px; padding: 0 8px 0 5px; justify-content: space-between; border: 1px solid #555; border-radius: 16px; background: #fff; }
.toggle i { width: 21px; height: 21px; border-radius: 50%; background: #616161; }
.save { margin-left: 14px; }
.undo { gap: 8px; margin-left: 19px; }
.custom { margin-left: 20px; }
.doc { gap: 8px; margin-left: 36px; font-size: 20px; }
.find { position: absolute; left: 50%; top: 5px; display: flex; align-items: center; gap: 20px; width: 552px; height: 48px; margin-left: -267px; padding: 0 19px; border: 1px solid #c6c6c6; border-radius: 6px; background: #fafafa; box-shadow: 0 1px 2px rgba(0, 0, 0, .2); }
.find input { flex: 1; font-size: 20px; padding: 0; }
.find input::placeholder { color: #555; }
.window { display: flex; gap: 56px; align-items: center; margin-left: auto; padding-right: 10px; }
.avatar { margin-right: -10px; }

.menu { display: flex; align-items: center; gap: 30px; height: 52px; padding: 0 16px 0 18px; font-size: 21px; }
.menu a { padding-top: 3px; line-height: 30px; }
.menu a.on { padding: 3px 1px 0 5px; font-weight: 700; box-shadow: 0 2px 0 #107c41; }
.menu a.context { color: #0f6b3a; }
.menu a.context + .context { margin-left: 8px; }
.menu-right { display: flex; gap: 12px; margin-left: auto; padding-top: 3px; }
.memo, .share { height: 36px; gap: 8px; border-radius: 6px; font-size: 20px; }
.memo { width: 81px; border: 1px solid #777; background: #fff; }
.share { width: 96px; background: #107c41; color: #fff; }

.ribbon { display: flex; position: relative; height: 152px; margin: 0 10px 0 4px; padding-top: 7px; border-radius: 12px; background: #fff; box-shadow: 0 2px 5px rgba(0, 0, 0, .25); flex: none; }
.group { display: flex; flex-direction: column; height: 136px; border-right: 1px solid #d0d0d0; flex: none; }
.body { display: flex; height: 116px; flex: none; }
.label { display: flex; justify-content: center; position: relative; height: 24px; flex: none; }
.label.has-launch { padding-right: 22px; }
.launch { position: absolute; right: 4px; top: 7px; }
.clip { width: 241px; }
.font { width: 416px; }
.align { width: 498px; }
.number { width: 241px; }
.style { width: 234px; }
.cells { width: 217px; }
.edit { width: 328px; }
.addin { width: 87px; }
.big { flex-direction: column; justify-content: flex-start; padding-top: 5px; line-height: 24px; }
.big > svg:first-child { margin-bottom: 3px; }
.big > svg + span + svg { margin-top: 10px; }
.big span { display: flex; align-items: center; gap: 8px; }
.paste { width: 74px; margin-left: 20px; }
.paste > svg:first-child { margin-left: 8px; }
.stack { display: flex; flex-direction: column; gap: 15px; padding-top: 5px; }
.clip .stack { margin-left: 13px; }
.line { height: 24px; gap: 8px; justify-content: flex-start; }
.wide svg:last-child { margin-left: 19px; }
.rows { display: flex; flex-direction: column; gap: 12px; padding: 11px 0 0 12px; }
.row { display: flex; gap: 3px; height: 36px; align-items: center; }
.rows > .line { height: 36px; gap: 7px; }
.ib { width: 36px; height: 36px; border-radius: 6px; position: relative; }
.sel { border: 1px solid #666; background: #ebebeb; }
.cv { width: 22px; height: 36px; }
.pair { display: flex; }
.sep { width: 1px; height: 36px; background: #d0d0d0; }
.tall { width: 1px; height: 94px; margin: 9px 2px 0 9px; background: #d0d0d0; }
.merge svg:last-child { margin-left: 25px; }
.pick { position: relative; display: flex; }
.pick select { width: 100%; height: 36px; padding: 0 4px; border: 1px solid #808080; border-radius: 6px; background: #fff; appearance: none; }
.pick svg { position: absolute; right: 4px; top: 15px; }
.name { width: 246px; }
.size { width: 64px; }
.fmt { width: 218px; }
.shrink { font-size: 17px; }
.grow svg, .shrink svg { align-self: flex-start; margin-top: 7px; }
.b { font-weight: 700; font-size: 17px; }
.i { font-style: italic; font-size: 17px; }
.u { font-size: 17px; text-decoration: underline; text-underline-offset: 5px; }
.ink { flex-direction: column; font-weight: 700; font-size: 17px; line-height: 20px; }
.ink i { width: 24px; height: 6px; background: #f00; }
.ruby { flex-direction: column; font-size: 13px; line-height: 16px; }
.ruby svg { margin-left: 16px; }
.pct { font-size: 26px; color: #444; }
.dec { flex-direction: column; align-items: flex-end; padding-right: 6px; font-size: 13px; line-height: 15px; }
.dec span { display: flex; align-items: center; }
.style .body { gap: 12px; padding-left: 18px; }
.cells .body { gap: 13px; padding-left: 18px; }
.cells .big { width: 52px; }
.edit .stack { margin-left: 18px; }
.sort { margin: 0 14px 0 22px; }
.addin .body { justify-content: center; }
.fold { position: absolute; right: 14px; bottom: 16px; }

.formula { display: flex; align-items: center; height: 40px; margin: 12px 10px 10px 5px; flex: none; font-size: 20px; }
.name-box, .fx, .entry { display: flex; align-items: center; height: 40px; border: 1px solid #cfcfcf; border-radius: 6px; background: #fff; }
.name-box { width: 150px; padding: 0 6px; }
.name-box input { flex: 1; padding: 0; font-weight: 400; }
.grip { margin: 0 15px 0 13px; }
.fx { width: 109px; justify-content: space-between; padding: 0 8px; }
.fn { font: italic 26px/28px "Liberation Serif", serif; }
.entry { flex: 1; margin-left: 7px; padding: 0 6px 2px 15px; }
.entry input { flex: 1; padding: 0; font-size: 22px; }

.work { display: flex; flex: 1; min-height: 0; }
.book { display: flex; flex-direction: column; flex: 1; min-width: 0; border-right: 1px solid #cdcdcd; }
.grid-area { display: flex; flex: 1; min-height: 0; }
.sheet { flex: 1; min-width: 0; overflow: hidden; background: #fff; }
table { width: 100%; table-layout: fixed; border-collapse: separate; border-spacing: 0; color: #000; }
.c-n { width: 40px; }
.c-a { width: 137px; }
.c-c { width: 127px; }
.c-g { width: 139px; }
.c-k { width: 138px; }
.c-f { width: 152px; }
.c-h { width: 118px; }
th { padding: 0; background: #efefef; color: #444; font-weight: 400; font-size: 20px; border-right: 1px solid #d9d9d9; border-bottom: 1px solid #d9d9d9; }
thead th { height: 34px; padding-bottom: 2px; border-bottom-color: #a6a6a6; }
tbody th { padding: 3px 8px 0 0; border-right-color: #a6a6a6; }
th.cur { background: #e0e0e0; color: #217346; }
thead th.cur { border-bottom: 2px solid #217346; }
.corner svg { margin: 2px 3px 0 auto; }
td { height: 34px; padding: 0 12px 3px 4px; border-right: 1px solid #e0e0e0; border-bottom: 1px solid #e0e0e0; line-height: 28px; font-size: 23px; white-space: nowrap; position: relative; }
.first td { height: 42px; }
.first th { padding-bottom: 3px; vertical-align: bottom; }
.title { padding: 0 0 6px; text-align: center; font-size: 31px; font-weight: 700; }
.mid { padding: 0 0 3px; text-align: center; }
.num { text-align: right; font-size: 22px; font-weight: 400; }
.box { border-color: #000; }
.under { border-bottom-color: #000; }
.fill { background: #d9e1f2; border-color: #d9e1f2; }
.fill-under { border-bottom-color: #d9e1f2; }
.rule { border-bottom-color: #8ea9db; }
.bold { font-weight: 700; }
.bare { border-color: #fff; }
.bare-last { border-right-color: #fff; }
.picked::before { content: ""; position: absolute; inset: -2px; border: 2px solid #217346; }
.picked::after { content: ""; position: absolute; right: -3px; bottom: -3px; width: 6px; height: 6px; background: #217346; border: solid #fff; border-width: 1px 0 0 1px; box-sizing: content-box; }
.drop { position: absolute; right: 0; bottom: 0; width: 25px; height: 25px; border: 1px solid #a6a9b0; background: #f7f8fa; }
.vbar { display: flex; flex-direction: column; align-items: center; width: 26px; margin: 0 2px -3px 3px; padding: 8px 0; border-radius: 13px; background: #f5f5f5; }
.vbar i { flex: 1; width: 12px; margin: 8px 0 43px; border-radius: 6px; background: #6e6e6e; }

.tabs { display: flex; align-items: center; height: 48px; flex: none; font-size: 22px; }
.nav { width: 48px; }
.nav:first-child { margin-left: 8px; }
.tab { height: 28px; padding: 0 20px; border-right: 1px solid #c6c6c6; line-height: 26px; }
.tab.on { align-self: flex-start; height: 42px; margin: 0 7px; padding: 0 14px; border: 0; border-radius: 0 0 8px 8px; background: #fff; }
.tab.on span { height: 34px; border-bottom: 3px solid #107c41; line-height: 28px; }
.add { margin-left: 62px; }
.hwrap { display: flex; align-items: center; gap: 22px; width: 784px; margin: 0 27px 0 auto; }
.hbar { display: flex; align-items: center; flex: 1; height: 26px; padding: 0 9px 0 8px; border-radius: 13px; background: #f5f5f5; }
.hbar i { flex: 1; height: 12px; margin: 0 58px 0 8px; border-radius: 6px; background: #6e6e6e; }

.pane { display: flex; flex-direction: column; width: 522px; padding: 0 15px 0 19px; background: #efefef; font-size: 19px; }
.pane-head { display: flex; align-items: center; gap: 43px; height: 65px; padding-right: 7px; }
h2 { flex: 1; margin: 0 0 0 -3px; font-size: 24px; line-height: 32px; }
.pane-sub { display: flex; align-items: center; justify-content: space-between; height: 42px; font-size: 20px; }
.gear { width: 66px; height: 41px; gap: 9px; padding-left: 4px; border: 1px solid #8a8a8a; background: #fff; }
.pane-find { display: flex; align-items: center; height: 37px; margin-top: 20px; padding: 0 4px 2px 8px; border: 1px solid #8a8a8a; background: #fff; }
.pane-find input { flex: 1; padding: 0; }
.pane-find input::placeholder { color: #777; }
.fields { flex: 1; margin-top: 26px; padding: 0 5px; border: 1px solid #8a8a8a; background: #fff; }
.fields label { display: flex; align-items: center; gap: 9px; height: 33px; }
.fields label span { flex: 1; }
.fields label.on { font-weight: 700; }
.fields a { display: block; line-height: 36px; }
input[type="checkbox"] { appearance: none; flex: none; width: 20px; height: 20px; border: 2px solid #8a8a8a; background: #fff; }
.fields input[type="checkbox"] { margin-bottom: 7px; }
.fields input[type="checkbox"]:checked { border: 0; background: #107c41 url("data:image/svg+xml,%3Csvg xmlns='http://www.w3.org/2000/svg' viewBox='0 0 20 20'%3E%3Cpath d='m5 10 4 4 7-8' fill='none' stroke='%23fff' stroke-width='2'/%3E%3C/svg%3E"); }
.hint { margin: 0; padding: 28px 0 0 5px; font-size: 20px; line-height: 28px; }
.areas { display: grid; grid-template-columns: 242px 1fr; margin: 25px 0 0 4px; }
.areas section { padding-right: 9px; border-right: 1px solid #a0a0a0; }
.areas section:nth-child(even) { padding: 0 0 0 3px; border-right: 0; }
.areas section:nth-child(-n+2) { padding-bottom: 9px; border-bottom: 1px solid #a0a0a0; }
h3 { display: flex; align-items: center; gap: 11px; height: 33px; margin: 0; padding: 0 6px 5px; font-size: 19px; font-weight: 350; line-height: 28px; }
.areas section:nth-child(n+3) h3 { height: 42px; padding-top: 7px; }
.well { height: 168px; padding: 3px 1px; background: #fff; }
.well button { width: 100%; height: 37px; padding: 0 10px; justify-content: space-between; border: 1px solid #a0a0a0; background: #fff; }
.pane-foot { display: flex; align-items: center; justify-content: space-between; height: 40px; margin: 30px 0 10px; padding-left: 8px; }
.pane-foot label { display: flex; align-items: center; gap: 11px; font-size: 20px; }
.pane-foot label input { border-radius: 3px; }
.pane-foot button { width: 88px; height: 39px; border: 1px solid #dcdcdc; color: #b8b8b8; }

.status { display: flex; align-items: center; height: 33px; flex: none; padding: 0 8px; border-top: 1px solid #fff; background: #f3f3f3; }
.status > svg { margin: 0 24px 0 30px; }
.access { gap: 7px; font-weight: 700; }
.views { display: flex; height: 32px; margin-left: auto; margin-right: 8px; }
.views button { width: 60px; }
.views .on { background: #e0e0e0; }
.step { width: 12px; }
.zoom { width: 148px; height: 20px; margin: 0 7px; appearance: none; background: linear-gradient(#666, #666) center / 100% 2px no-repeat; }
.zoom::-webkit-slider-thumb { appearance: none; width: 8px; height: 18px; background: #666; }
.pc { margin-left: 18px; }
</style>
